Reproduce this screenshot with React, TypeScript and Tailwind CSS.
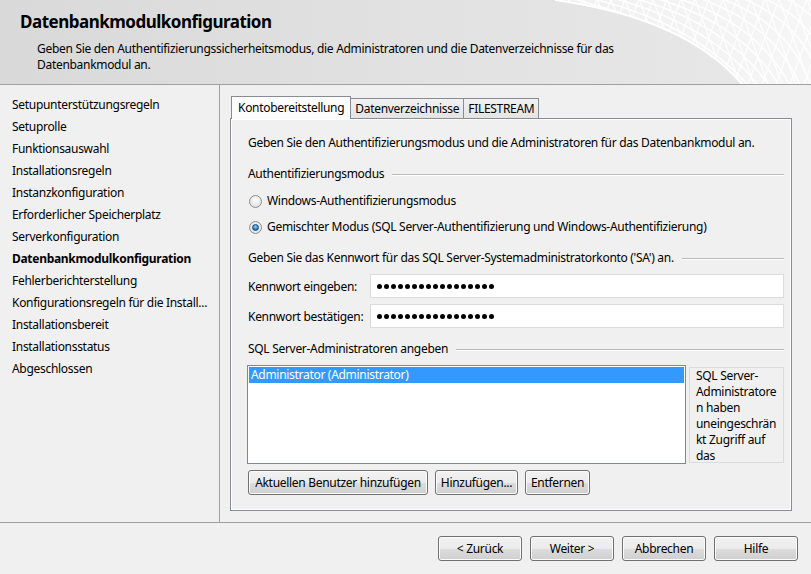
const font = { fontFamily: '"Noto Sans", "Open Sans", sans-serif' };

const navItems = [
  'Setupunterstützungsregeln',
  'Setuprolle',
  'Funktionsauswahl',
  'Installationsregeln',
  'Instanzkonfiguration',
  'Erforderlicher Speicherplatz',
  'Serverkonfiguration',
  'Datenbankmodulkonfiguration',
  'Fehlerberichterstellung',
  'Konfigurationsregeln für die Install...',
  'Installationsbereit',
  'Installationsstatus',
  'Abgeschlossen',
];

function HeaderMesh() {
  const arcs = [];
  for (let k = 0; k < 14; k++) {
    arcs.push(
      <path
        key={'a' + k}
        d={`M ${560 + k * 22} -4 Q ${680 + k * 16} 22 ${742 + k * 10} 90`}
        fill="none"
        stroke="#ffffff"
        strokeWidth="1.6"
      />
    );
  }
  const diag = [];
  for (let k = 0; k < 22; k++) {
    const x = 540 + k * 14;
    diag.push(<line key={'d' + k} x1={x} y1={-4} x2={x + 34} y2={90} stroke="#ffffff" strokeWidth="1.3" />);
    diag.push(<line key={'e' + k} x1={x + 30} y1={-4} x2={x - 4} y2={90} stroke="#ffffff" strokeWidth="1.3" />);
  }
  return (
    <svg className="absolute left-0 top-0" width="811" height="84" viewBox="0 0 811 84">
      <defs>
        <clipPath id="meshclip">
          <path d="M 555 0 Q 685 18 742 84 L 811 84 L 811 0 Z" />
        </clipPath>
        <linearGradient id="meshfill" x1="0" y1="0" x2="1" y2="0">
          <stop offset="0" stopColor="#f0f0f0" />
          <stop offset="1" stopColor="#f6f6f6" />
        </linearGradient>
      </defs>
      <path d="M 555 0 Q 685 18 742 84 L 811 84 L 811 0 Z" fill="url(#meshfill)" />
      <g clipPath="url(#meshclip)" opacity="0.9">
        {arcs}
        {diag}
      </g>
      <path d="M 555 0 Q 685 18 742 84" fill="none" stroke="#ffffff" strokeWidth="2" />
    </svg>
  );
}

function Radio({ checked }: { checked?: boolean }) {
  return (
    <span className="flex h-[13px] w-[13px] items-center justify-center rounded-full border border-[#8e8f8f] bg-[radial-gradient(circle_at_50%_40%,#ffffff,#d6d6d6)]">
      {checked && (
        <span className="h-[7px] w-[7px] rounded-full border border-[#1a4d7a] bg-[radial-gradient(circle_at_50%_35%,#8fd0ff,#1f72b8_70%)]" />
      )}
    </span>
  );
}

function WinButton({ label, className }: { label: string; className?: string }) {
  return (
    <button
      className={
        'flex h-[25px] items-center justify-center rounded-[3px] border border-[#707070] bg-[linear-gradient(#f2f2f2,#ebebeb_50%,#dddddd_50%,#cfcfcf)] text-[12px] text-black shadow-[inset_0_0_0_1px_#fcfcfc] ' +
        (className || '')
      }
    >
      {label}
    </button>
  );
}

function GroupTitle({ text }: { text: string }) {
  return (
    <div className="flex items-center gap-2">
      <span className="whitespace-nowrap">{text}</span>
      <div className="h-px flex-1 bg-[#b8b8b8] shadow-[0_1px_0_#ffffff]" />
    </div>
  );
}

function Password() {
  return (
    <div className="flex h-[24px] flex-1 items-center gap-[2px] border border-[#dcdcdc] bg-white pl-[6px]">
      {Array.from({ length: 17 }).map((_, i) => (
        <span key={i} className="h-[5px] w-[5px] rounded-full bg-black" />
      ))}
    </div>
  );
}

export default function App() {
  return (
    <div
      className="flex h-[574px] w-[811px] flex-col overflow-hidden bg-[#f0f0f0] text-[12px] tracking-[-0.3px] text-black"
      style={font}
    >
      {/* header */}
      <div className="relative h-[85px] shrink-0 border-b border-[#a0a0a0] bg-[linear-gradient(90deg,#d9d9d9,#e3e3e3_60%,#e8e8e8)]">
        <HeaderMesh />
        <div className="relative pl-[20px] pt-[10px]">
          <h1 className="text-[17px] font-bold leading-[24px] tracking-[-0.5px]">Datenbankmodulkonfiguration</h1>
          <p className="mt-[7px] w-[600px] pl-[17px] leading-[16px]">
            Geben Sie den Authentifizierungssicherheitsmodus, die Administratoren und die Datenverzeichnisse für das
            Datenbankmodul an.
          </p>
        </div>
      </div>

      {/* body */}
      <div className="flex min-h-0 flex-1">
        <div className="w-[220px] shrink-0 border-r border-[#a0a0a0] pl-[12px] pt-[9px]">
          {navItems.map((item) => (
            <div
              key={item}
              className={'h-[22px] whitespace-nowrap leading-[22px] ' + (item === 'Datenbankmodulkonfiguration' ? 'font-bold' : '')}
            >
              {item}
            </div>
          ))}
        </div>

        <div className="flex flex-1 flex-col pb-[11px] pl-[10px] pr-[19px] pt-[11px]">
          {/* tabs */}
          <div className="relative z-10 flex h-[22px] items-end">
            <div className="-mb-px ml-px flex h-[23px] items-center border border-b-0 border-[#898c95] bg-[#fcfcfc] px-[6px]">
              Kontobereitstellung
            </div>
            <div className="flex h-[20px] items-center border border-l-0 border-b-0 border-[#898c95] bg-[linear-gradient(#f2f2f2,#e4e4e4)] px-[4px]">
              Datenverzeichnisse
            </div>
            <div className="flex h-[20px] items-center border border-l-0 border-b-0 border-[#898c95] bg-[linear-gradient(#f2f2f2,#e4e4e4)] px-[4px]">
              FILESTREAM
            </div>
          </div>

          {/* panel */}
          <div className="flex-1 border border-[#898c95] bg-[#f0f0f0] shadow-[inset_0_0_0_1px_#ffffff]">
            <div className="pl-[17px] pr-[7px] pt-[15px]">
              <p className="leading-[18px]">
                Geben Sie den Authentifizierungsmodus und die Administratoren für das Datenbankmodul an.
              </p>

              <div className="mt-[13px] leading-[18px]">
                <GroupTitle text="Authentifizierungsmodus" />
              </div>

              <div className="mt-[9px] flex h-[18px] items-center gap-[5px] pl-[1px]">
                <Radio />
                <span>Windows-Authentifizierungsmodus</span>
              </div>
              <div className="mt-[8px] flex h-[18px] items-center gap-[5px] pl-[1px]">
                <Radio checked />
                <span>Gemischter Modus (SQL Server-Authentifizierung und Windows-Authentifizierung)</span>
              </div>

              <div className="mt-[13px] leading-[18px]">
                <GroupTitle text="Geben Sie das Kennwort für das SQL Server-Systemadministratorkonto ('SA') an." />
              </div>

              <div className="mt-[7px] flex items-center">
                <span className="w-[122px] pt-[2px]">Kennwort eingeben:</span>
                <Password />
              </div>
              <div className="mt-[6px] flex items-center">
                <span className="w-[122px] pt-[2px]">Kennwort bestätigen:</span>
                <Password />
              </div>

              <div className="mt-[12px] leading-[18px]">
                <GroupTitle text="SQL Server-Administratoren angeben" />
              </div>

              <div className="-ml-px mt-[7px] flex gap-[3px]">
                <div className="h-[99px] w-[439px] border border-[#828790] bg-white p-px">
                  <div className="h-[16px] bg-[#3399ff] pl-[2px] leading-[16px] text-white">Administrator (Administrator)</div>
                </div>
                <div className="mt-[2px] h-[96px] flex-1 border border-[#dcdcdc] bg-[#f0f0f0] px-[6px] leading-[16px]">
                  SQL Server-
                  <br />
                  Administratore
                  <br />
                  n haben
                  <br />
                  uneingeschrän
                  <br />
                  kt Zugriff auf
                  <br />
                  das
                </div>
              </div>

              <div className="mt-[6px] flex gap-[7px]">
                <WinButton label="Aktuellen Benutzer hinzufügen" className="w-[180px]" />
                <WinButton label="Hinzufügen..." className="w-[83px]" />
                <WinButton label="Entfernen" className="w-[65px]" />
              </div>
            </div>
          </div>
        </div>
      </div>

      {/* footer */}
      <div className="flex h-[52px] shrink-0 items-center justify-end gap-[8px] border-t border-[#a0a0a0] pr-[13px]">
        <WinButton label="< Zurück" className="w-[84px]" />
        <WinButton label="Weiter >" className="w-[84px]" />
        <WinButton label="Abbrechen" className="w-[84px]" />
        <WinButton label="Hilfe" className="w-[84px]" />
      </div>
    </div>
  );
}
